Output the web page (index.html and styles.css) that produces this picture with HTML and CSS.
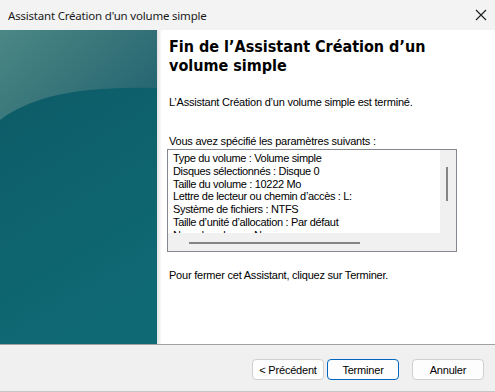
FILE: index.html
```html
<!DOCTYPE html>
<html lang="fr">
<head>
<meta charset="utf-8">
<title>Assistant Création d'un volume simple</title>
<link rel="stylesheet" href="styles.css">
</head>
<body>
<div class="window">
  <div class="titlebar">
    <span class="title">Assistant Création d'un volume simple</span>
    <svg class="close" width="12" height="12" viewBox="0 0 12 12"><path d="M1 1 L11 11 M11 1 L1 11" stroke="#1b1b1b" stroke-width="1.1" fill="none"/></svg>
  </div>
  <div class="main">
    <div class="banner">
      <svg width="157" height="314" viewBox="0 0 157 314" preserveAspectRatio="none">
        <defs>
          <linearGradient id="bg" x1="0" y1="0" x2="0.3" y2="1">
            <stop offset="0" stop-color="#0c5965"/>
            <stop offset="1" stop-color="#0f6974"/>
          </linearGradient>
          <linearGradient id="top" x1="0" y1="0" x2="1" y2="0.6">
            <stop offset="0" stop-color="#4b8784"/>
            <stop offset="1" stop-color="#276772"/>
          </linearGradient>
        </defs>
        <rect width="157" height="314" fill="url(#bg)"/>
        <path d="M0 0 H157 V58 C 100 57, 40 60, 0 90 Z" fill="url(#top)"/>
      </svg>
    </div>
    <div class="shade"></div>
    <div class="content">
      <h1 class="heading">Fin de l’Assistant Création d’un<br>volume simple</h1>
      <p class="intro">L’Assistant Création d’un volume simple est terminé.</p>
      <p class="label">Vous avez spécifié les paramètres suivants :</p>
      <div class="listbox">
        <div class="list-row">
          <div class="lines">
            <div>Type du volume : Volume simple</div>
            <div>Disques sélectionnés : Disque 0</div>
            <div>Taille du volume : 10222 Mo</div>
            <div>Lettre de lecteur ou chemin d’accès : L:</div>
            <div>Système de fichiers : NTFS</div>
            <div>Taille d’unité d’allocation : Par défaut</div>
            <div>Nom du volume : Nouveau nom</div>
          </div>
          <div class="vscroll"><div class="vthumb"></div></div>
        </div>
        <div class="hscroll"><div class="htrack"><div class="hthumb"></div></div><div class="corner"></div></div>
      </div>
      <p class="outro">Pour fermer cet Assistant, cliquez sur Terminer.</p>
    </div>
  </div>
  <div class="footer">
    <button class="btn">&lt; Précédent</button>
    <button class="btn default">Terminer</button>
    <button class="btn cancel">Annuler</button>
  </div>
</div>
</body>
</html>
```
FILE: styles.css
```css
html, body {
  margin: 0;
  padding: 0;
  background: #f0f0f0;
}
.window {
  width: 495px;
  height: 392px;
  display: flex;
  flex-direction: column;
  overflow: hidden;
  font-family: "Liberation Sans", Arial, sans-serif;
  color: #000;
}
.titlebar {
  height: 30px;
  flex: none;
  background: #f3f3f3;
  display: flex;
  align-items: center;
  justify-content: space-between;
  padding: 0 8px;
}
.title {
  font-family: "Noto Sans", "Open Sans", sans-serif;
  font-size: 11.5px;
  letter-spacing: -0.2px;
  color: #1a1a1a;
}
.main {
  height: 314px;
  flex: none;
  display: flex;
  background: #fff;
}
.banner {
  width: 157px;
  flex: none;
}
.banner svg {
  display: block;
}
.shade {
  width: 5px;
  flex: none;
  background: linear-gradient(to right, #e2e2e2, #f4f4f4 60%, #fff);
}
.content {
  flex: 1;
  padding: 7px 0 0 7px;
  font-size: 11px;
  letter-spacing: -0.22px;
}
.heading {
  margin: 0;
  font-family: "DejaVu Sans Condensed", "DejaVu Sans", Verdana, sans-serif;
  font-stretch: condensed;
  font-weight: bold;
  font-size: 16px;
  line-height: 19px;
  letter-spacing: 0;
}
.intro {
  margin: 21px 0 0;
  line-height: 13px;
}
.label {
  margin: 26px 0 0;
  line-height: 13px;
}
.listbox {
  margin: 1px 0 0 -2px;
  width: 288px;
  height: 101px;
  border: 1px solid #828790;
  display: flex;
  flex-direction: column;
  background: #fff;
}
.list-row {
  flex: 1;
  display: flex;
  min-height: 0;
}
.lines {
  flex: 1;
  overflow: hidden;
  padding: 2px 0 0 5px;
  line-height: 12.8px;
  letter-spacing: -0.33px;
  white-space: nowrap;
}
.vscroll {
  width: 16px;
  flex: none;
  background: #f0f0f0;
  position: relative;
}
.vthumb {
  position: absolute;
  left: 6px;
  top: 17px;
  width: 2px;
  height: 34px;
  background: #858585;
}
.hscroll {
  height: 18px;
  flex: none;
  display: flex;
  background: #f0f0f0;
}
.htrack {
  flex: 1;
  position: relative;
}
.hthumb {
  position: absolute;
  left: 21px;
  top: 9px;
  width: 171px;
  height: 2px;
  background: #858585;
}
.corner {
  width: 16px;
  background: #f0f0f0;
}
.outro {
  margin: 17px 0 0;
  line-height: 13px;
}
.footer {
  flex: 1;
  border-top: 1px solid #a0a0a0;
  border-bottom: 1px solid #c6c6c6;
  background: #f0f0f0;
  display: flex;
  align-items: flex-start;
  padding: 14px 11px 0 0;
  justify-content: flex-end;
  gap: 3px;
}
.btn {
  width: 72px;
  height: 21px;
  padding: 0;
  margin: 0;
  border: 1px solid #d0d0d0;
  border-radius: 4px;
  background: #fdfdfd;
  font-family: "Liberation Sans", Arial, sans-serif;
  font-size: 11px;
  letter-spacing: -0.2px;
  color: #000;
}
.btn.default {
  border-color: #0067c0;
}
.btn.cancel {
  margin-left: 10px;
}
```
